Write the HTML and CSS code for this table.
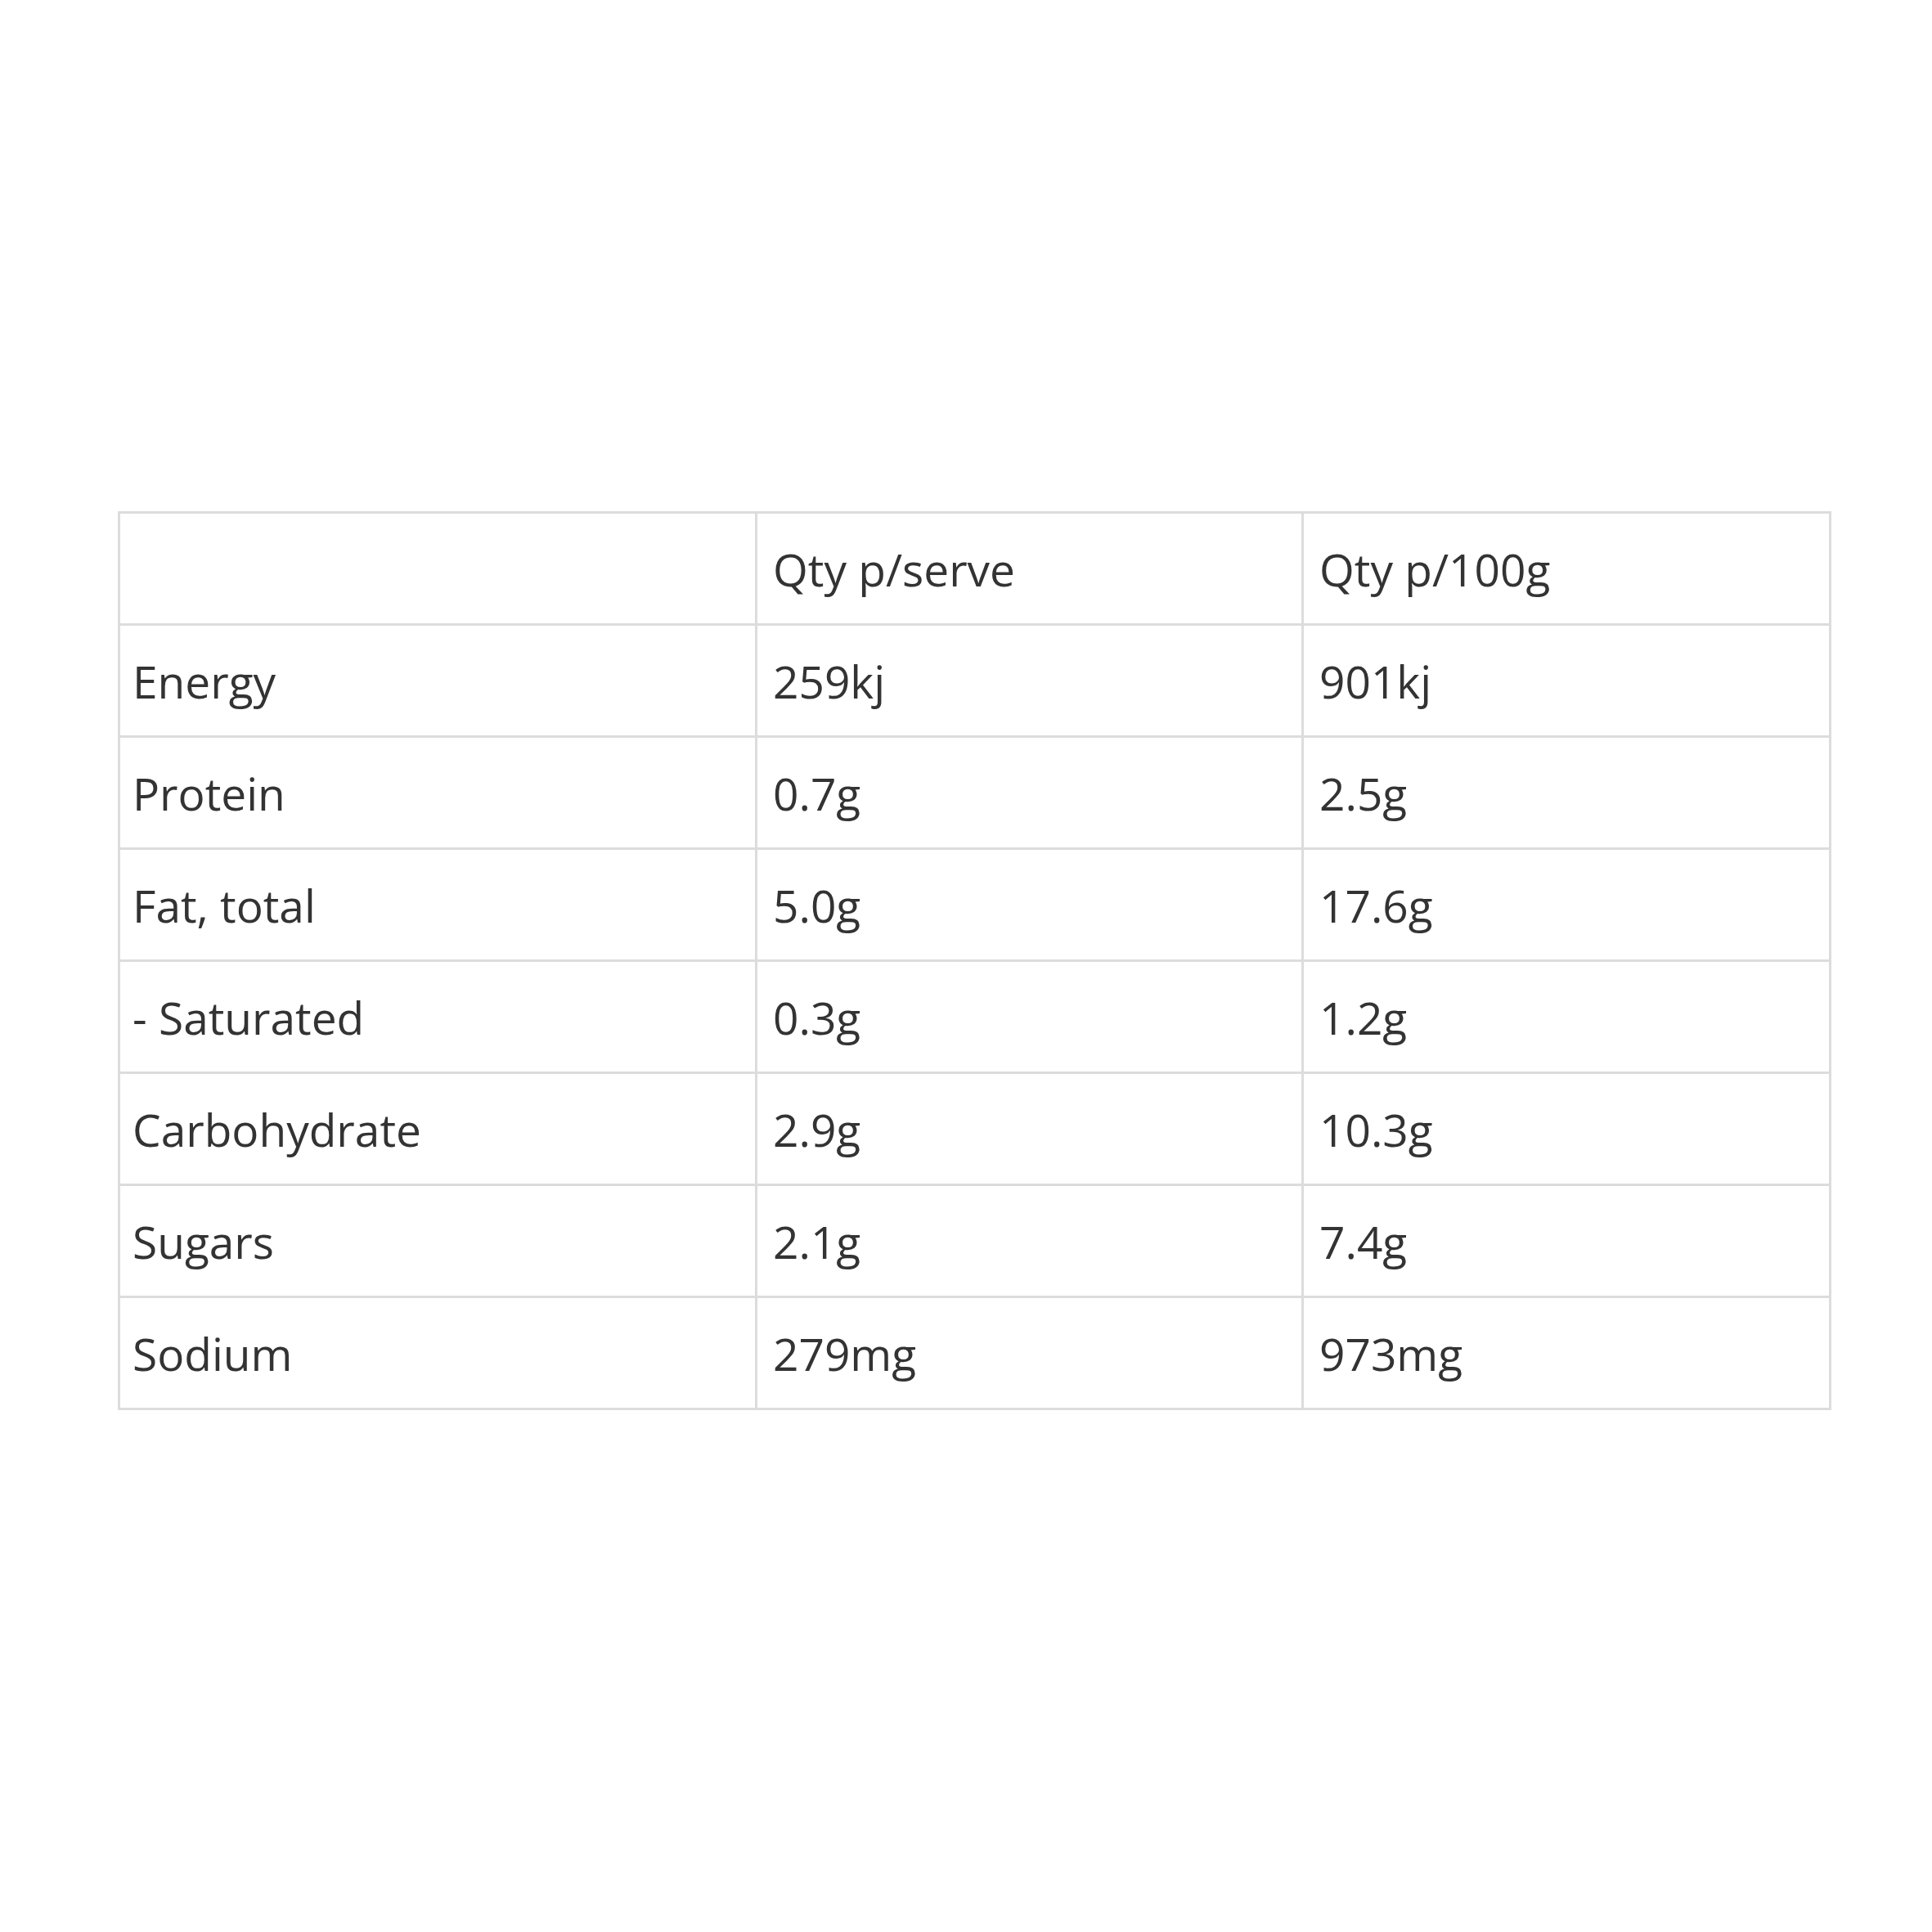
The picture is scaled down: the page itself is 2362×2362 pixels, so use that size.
FILE: index.html
```html
<!DOCTYPE html>
<html>
<head>
<meta charset="utf-8">
<link rel="stylesheet" href="styles.css">
</head>
<body>
<div class="page">
<table class="nutrition">
<colgroup><col class="c1"><col class="c2"><col class="c3"></colgroup>
<tr><td></td><td>Qty p/serve</td><td>Qty p/100g</td></tr>
<tr><td>Energy</td><td>259kj</td><td>901kj</td></tr>
<tr><td>Protein</td><td>0.7g</td><td>2.5g</td></tr>
<tr><td>Fat, total</td><td>5.0g</td><td>17.6g</td></tr>
<tr><td>- Saturated</td><td>0.3g</td><td>1.2g</td></tr>
<tr><td>Carbohydrate</td><td>2.9g</td><td>10.3g</td></tr>
<tr><td>Sugars</td><td>2.1g</td><td>7.4g</td></tr>
<tr><td>Sodium</td><td>279mg</td><td>973mg</td></tr>
</table>
</div>
</body>
</html>
```
FILE: styles.css
```css
html, body {
  margin: 0;
  padding: 0;
  background: #ffffff;
}
.page {
  padding: 625px 0 0 144px;
}
.nutrition {
  border-collapse: collapse;
  width: 2092px;
  table-layout: fixed;
  font-family: "Open Sans", "DejaVu Sans", sans-serif;
  font-size: 55px;
  color: #333333;
}
.c1 { width: 779px; }
.c2 { width: 668px; }
.c3 { width: 645px; }
.nutrition td {
  border: 3px solid #dcdcdc;
  height: 137px;
  padding: 0 16px 0 19px;
  vertical-align: middle;
  box-sizing: border-box;
}
.nutrition td:first-child {
  padding-left: 15px;
}
```
